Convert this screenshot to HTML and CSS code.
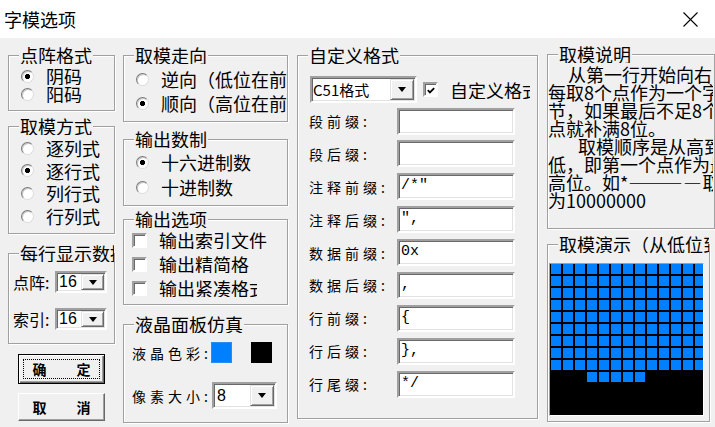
FILE: index.html
```html
<!DOCTYPE html>
<html lang="zh-CN">
<head>
<meta charset="utf-8">
<title>字模选项</title>
<link rel="stylesheet" href="styles.css">
</head>
<body>
<header class="titlebar">
  <span class="title">字模选项</span>
  <svg class="close" viewBox="0 0 15 15" width="15" height="15"><path d="M0.5 0.5L14.5 14.5M14.5 0.5L0.5 14.5" stroke="#000" stroke-width="1.1" fill="none"/></svg>
</header>
<main class="dialog">
  <div class="col col1">
    <section class="group g-dot">
      <div class="legend">点阵格式</div>
      <div class="list pad3 rows18">
        <div class="radio on"><i></i><span>阴码</span></div>
        <div class="radio"><i></i><span>阳码</span></div>
      </div>
    </section>
    <section class="group g-mode">
      <div class="legend">取模方式</div>
      <div class="list pad2 rows23">
        <div class="radio"><i></i><span>逐列式</span></div>
        <div class="radio on"><i></i><span>逐行式</span></div>
        <div class="radio"><i></i><span>列行式</span></div>
        <div class="radio"><i></i><span>行列式</span></div>
      </div>
    </section>
    <section class="group g-perline">
      <div class="legend">每行显示数据</div>
      <div class="perline">
        <div class="prow">
          <span class="plabel">点阵:</span>
          <div class="field combo c-small"><span class="val">16</span><span class="dbtn"><b class="tri"></b></span></div>
        </div>
        <div class="prow">
          <span class="plabel">索引:</span>
          <div class="field combo c-small"><span class="val">16</span><span class="dbtn"><b class="tri"></b></span></div>
        </div>
      </div>
    </section>
    <button class="btn default"><span class="focus"><span>确</span><span>定</span></span></button>
    <button class="btn cancel"><span>取</span><span>消</span></button>
  </div>

  <div class="col col2">
    <section class="group g-dir">
      <div class="legend">取模走向</div>
      <div class="list pad3 rows24">
        <div class="radio"><i></i><span>逆向（低位在前）</span></div>
        <div class="radio on"><i></i><span>顺向（高位在前）</span></div>
      </div>
    </section>
    <section class="group g-radix">
      <div class="legend">输出数制</div>
      <div class="list pad15 rows25">
        <div class="radio on"><i></i><span>十六进制数</span></div>
        <div class="radio"><i></i><span>十进制数</span></div>
      </div>
    </section>
    <section class="group g-out">
      <div class="legend">输出选项</div>
      <div class="list rows24 checks">
        <div class="check"><i></i><span>输出索引文件</span></div>
        <div class="check"><i></i><span class="clip90">输出精简格式</span></div>
        <div class="check"><i></i><span class="clip98">输出紧凑格式</span></div>
      </div>
    </section>
    <section class="group g-lcd">
      <div class="legend">液晶面板仿真</div>
      <div class="lcdopts">
        <div class="lrow">
          <span class="slabel w79">液晶色彩:</span>
          <span class="swatch blue"></span>
          <span class="swatch black"></span>
        </div>
        <div class="lrow r2">
          <span class="slabel w80">像素大小:</span>
          <div class="field combo c-px"><span class="val">8</span><span class="dbtn"><b class="tri"></b></span></div>
        </div>
      </div>
    </section>
  </div>

  <div class="col col3">
    <section class="group g-custom">
      <div class="legend">自定义格式</div>
      <div class="crow1">
        <div class="field combo c-fmt"><span class="val">C51格式</span><span class="dbtn"><b class="tri"></b></span></div>
        <div class="check on"><i><svg viewBox="0 0 11 11" width="11" height="11"><path d="M2 5.2L4.3 7.6L9 2.8" stroke="#000" stroke-width="2" fill="none"/></svg></i><span class="clip80">自定义格式</span></div>
      </div>
      <div class="frows">
        <div class="frow"><span class="slabel">段前缀:</span><div class="field text"></div></div>
        <div class="frow"><span class="slabel">段后缀:</span><div class="field text"></div></div>
        <div class="frow"><span class="slabel">注释前缀:</span><div class="field text">/*"</div></div>
        <div class="frow"><span class="slabel">注释后缀:</span><div class="field text">",</div></div>
        <div class="frow"><span class="slabel">数据前缀:</span><div class="field text">0x</div></div>
        <div class="frow"><span class="slabel">数据后缀:</span><div class="field text">,</div></div>
        <div class="frow"><span class="slabel">行前缀:</span><div class="field text">{</div></div>
        <div class="frow"><span class="slabel">行后缀:</span><div class="field text">},</div></div>
        <div class="frow"><span class="slabel">行尾缀:</span><div class="field text">*/</div></div>
      </div>
    </section>
  </div>

  <div class="col col4">
    <section class="group g-desc">
      <div class="legend">取模说明</div>
      <div class="desc">
        <div class="ind1">从第一行开始向右</div>
        <div>每取8个点作为一个字节</div>
        <div>节，如果最后不足8个</div>
        <div>点就补满8位。</div>
        <div class="ind2">取模顺序是从高到</div>
        <div>低，即第一个点作为最</div>
        <div>高位。如*<span class="dash">————</span>取</div>
        <div>为10000000</div>
      </div>
    </section>
    <section class="group g-demo">
      <div class="legend">取模演示（从低位到高位）</div>
      <div class="lcd">
        <i></i><i></i><i></i><i></i><i></i><i></i><i></i><i></i><i></i><i></i><i></i><i></i><i></i>
        <i></i><i></i><i></i><i></i><i></i><i></i><i></i><i></i><i></i><i></i><i></i><i></i><i></i>
        <i></i><i></i><i></i><i></i><i></i><i></i><i></i><i></i><i></i><i></i><i></i><i></i><i></i>
        <i></i><i></i><i></i><i></i><i></i><i></i><i></i><i></i><i></i><i></i><i></i><i></i><i></i>
        <i></i><i></i><i></i><i></i><i></i><i></i><i></i><i></i><i></i><i></i><i></i><i></i><i></i>
        <i></i><i></i><i></i><i></i><i></i><i></i><i></i><i></i><i></i><i></i><i></i><i></i><i></i>
        <i></i><i></i><i></i><i></i><i></i><i></i><i></i><i></i><i></i><i></i><i></i><i></i><i></i>
        <i></i><i></i><i></i><i></i><i></i><i></i><i></i><i></i><i></i><i></i><i></i><i></i><i></i>
        <i></i><i></i><i></i><i></i><i></i><i></i><i></i><i></i><i></i><i></i><i></i><i></i><i></i>
        <i class="off"></i><i class="off"></i><i class="off"></i><i></i><i></i><i></i><i></i><i></i>
      </div>
    </section>
  </div>
</main>
</body>
</html>
```

FILE: styles.css
```css
* { box-sizing: border-box; margin: 0; padding: 0; }
html, body { width: 715px; height: 427px; overflow: hidden; }
body {
  background: #f0f0f0;
  font-family: "Noto Sans CJK SC", "Noto Sans", sans-serif;
  font-size: 18px;
  color: #000;
}

.titlebar {
  height: 38px;
  background: #fff;
  display: flex;
  align-items: center;
  padding-left: 4px;
}
.title { font-size: 18px; line-height: 20px; }
.close { margin-left: auto; margin-right: 17px; }

.dialog {
  display: flex;
  align-items: flex-start;
  padding-left: 8px;
  height: 389px;
}
.col { flex: none; display: flex; flex-direction: column; align-items: flex-start; }
.col1 { width: 107px; }
.col2 { width: 165px; margin-left: 8px; }
.col3 { width: 241px; margin-left: 9px; }
.col4 { width: 168px; margin-left: 9px; }

.group {
  width: 100%;
  flex: none;
  border: 1px solid #a0a0a0;
  box-shadow: inset 1px 1px 0 #fff, 1px 1px 0 #fff;
}
.legend {
  margin: -9px 0 0 10px;
  padding: 0 1px;
  height: 17px;
  line-height: 17px;
  width: max-content;
  max-width: calc(100% - 10px);
  overflow: hidden;
  white-space: nowrap;
  background: #f0f0f0;
}

.g-dot { margin-top: 17px; height: 56px; }
.g-mode { margin-top: 15px; height: 108px; }
.g-perline { margin-top: 19px; height: 91px; }
.g-dir { margin-top: 17px; height: 67px; }
.g-radix { margin-top: 17px; height: 67px; }
.g-out { margin-top: 13px; height: 86px; }
.g-lcd { margin-top: 19px; height: 99px; }
.g-custom { margin-top: 17px; height: 364px; }
.g-desc { margin-top: 16px; height: 175px; }
.g-demo { margin-top: 15px; height: 178px; width: 163px; }

.list { padding-left: 12px; }
.pad3 { padding-top: 3px; }
.pad2 { padding-top: 1.7px; }
.pad15 { padding-top: 1.5px; }
.rows18 > * { height: 18px; }
.rows23 > * { height: 22.7px; }
.rows24 > * { height: 24px; }
.rows25 > * { height: 25px; }

.radio, .check {
  display: flex;
  align-items: center;
  white-space: nowrap;
  overflow: hidden;
  line-height: 18px;
}
.radio i {
  flex: none;
  width: 13px;
  height: 13px;
  border-radius: 50%;
  background: #fff;
  border: 1px solid;
  border-color: #7a7a7a #dcdcdc #dcdcdc #7a7a7a;
  box-shadow: inset 1px 1px 0 #c8c8c8;
}
.radio.on i { background: radial-gradient(circle at 50% 50%, #000 0 2.3px, #fff 2.9px); }
.radio span { margin-left: 12px; }

.checks { padding-left: 8px; }
.check i {
  flex: none;
  width: 15px;
  height: 15px;
  background: #fff;
  border: 2px solid;
  border-color: #a0a0a0 #fff #fff #a0a0a0;
  box-shadow: inset 1px 1px 0 #696969;
  display: flex;
  align-items: center;
  justify-content: center;
}
.check i svg { display: block; margin: 1px 0 0 1px; }
.check span { margin-left: 12px; overflow: hidden; }
.clip90 { width: 90px; }
.clip98 { width: 98px; }
.clip80 { width: 80px; }

.field {
  background: #fff;
  border: 2px solid;
  border-color: #a0a0a0 #fff #fff #a0a0a0;
  box-shadow: inset 1px 1px 0 #696969, inset -1px -1px 0 #e3e3e3;
}
.combo { display: flex; align-items: stretch; flex: none; }
.combo .val {
  flex: 1;
  padding-left: 2px;
  display: flex;
  align-items: center;
  white-space: nowrap;
  overflow: hidden;
}
.dbtn {
  flex: none;
  width: 24px;
  margin: 1px 1px 1px 0;
  background: #f0f0f0;
  border: 1px solid;
  border-color: #e3e3e3 #696969 #696969 #e3e3e3;
  box-shadow: inset 1px 1px 0 #fff, inset -1px -1px 0 #a0a0a0;
  display: flex;
  align-items: center;
  justify-content: center;
}
.tri {
  width: 0;
  height: 0;
  border-left: 4.5px solid transparent;
  border-right: 4.5px solid transparent;
  border-top: 5px solid #000;
}

.perline { padding: 9px 0 0 4px; }
.prow { display: flex; align-items: center; height: 22px; }
.prow + .prow { margin-top: 15px; }
.plabel { width: 42px; flex: none; font-size: 16px; line-height: 18px; white-space: nowrap; }
.c-small { width: 52px; height: 22px; font-family: "Liberation Sans", sans-serif; font-size: 16px; }
.c-small .val { padding-left: 2px; }
.c-small .dbtn { width: 23px; }

.slabel {
  flex: none;
  font-size: 14px;
  letter-spacing: 4px;
  line-height: 16px;
  white-space: nowrap;
}
.lcdopts { padding: 9px 0 0 8px; }
.lrow { display: flex; align-items: center; height: 21px; }
.lrow.r2 { margin-top: 19px; height: 27px; }
.w79 { width: 79px; }
.w80 { width: 80px; }
.swatch { flex: none; width: 21px; height: 21px; }
.swatch.blue { background: #0080ff; border: 1px solid #2a8cf0; }
.swatch.black { background: #000; margin-left: 19px; }
.c-px { width: 65px; height: 27px; font-family: "Liberation Sans", sans-serif; font-size: 16px; }
.c-px .val { padding-left: 3px; }

.crow1 { display: flex; align-items: center; margin: 12px 0 0 12px; height: 27px; }
.c-fmt { width: 107px; height: 27px; font-size: 15px; }
.c-fmt .val { padding-left: 1px; }
.crow1 .check { margin-left: 6px; }
.frows { margin-top: 4.5px; padding-left: 11px; }
.frow { display: flex; align-items: center; height: 27px; }
.frow + .frow { margin-top: 5.875px; }
.frow .slabel { width: 88px; }
.field.text {
  width: 118px;
  height: 27px;
  padding-left: 2px;
  font-family: "Liberation Mono", monospace;
  font-size: 15px;
  line-height: 22px;
  white-space: pre;
}

.desc {
  padding-top: 2px;
  margin-right: 1px;
  font-size: 18px;
  line-height: 18px;
  white-space: nowrap;
  overflow: hidden;
}
.ind1 { padding-left: 20px; }
.ind2 { padding-left: 30px; }
.dash { letter-spacing: 1px; }

.lcd {
  margin: 10px 0 0 1px;
  width: 155px;
  height: 153px;
  background: #000;
  border: 1px solid;
  border-color: #a0a0a0 #fff #fff #a0a0a0;
  padding: 0 0 0 1px;
  overflow: hidden;
  display: grid;
  grid-template-columns: repeat(13, 10px);
  grid-auto-rows: 10px;
  gap: 2px;
  align-content: start;
}
.lcd i { display: block; background: #0080ff; }
.lcd i.off { background: transparent; }

.btn {
  flex: none;
  width: 87px;
  margin-left: 10px;
  background: #f0f0f0;
  font-family: "Noto Sans CJK SC", sans-serif;
  font-size: 14px;
  font-weight: bold;
  color: #000;
  display: flex;
  align-items: center;
  justify-content: center;
  gap: 30px;
}
.btn.default {
  margin-top: 10px;
  height: 30px;
  border: 1px solid #000;
  box-shadow: inset 1px 1px 0 #fff, inset -1px -1px 0 #696969, inset -2px -2px 0 #a0a0a0;
}
.btn.default .focus {
  width: 77px;
  height: 20px;
  border: 1px dotted #000;
  display: flex;
  align-items: center;
  justify-content: center;
  gap: 30px;
}
.btn.cancel {
  margin-top: 9px;
  height: 28px;
  border: 1px solid;
  border-color: #fff #696969 #696969 #fff;
  box-shadow: inset -1px -1px 0 #a0a0a0;
}
```
